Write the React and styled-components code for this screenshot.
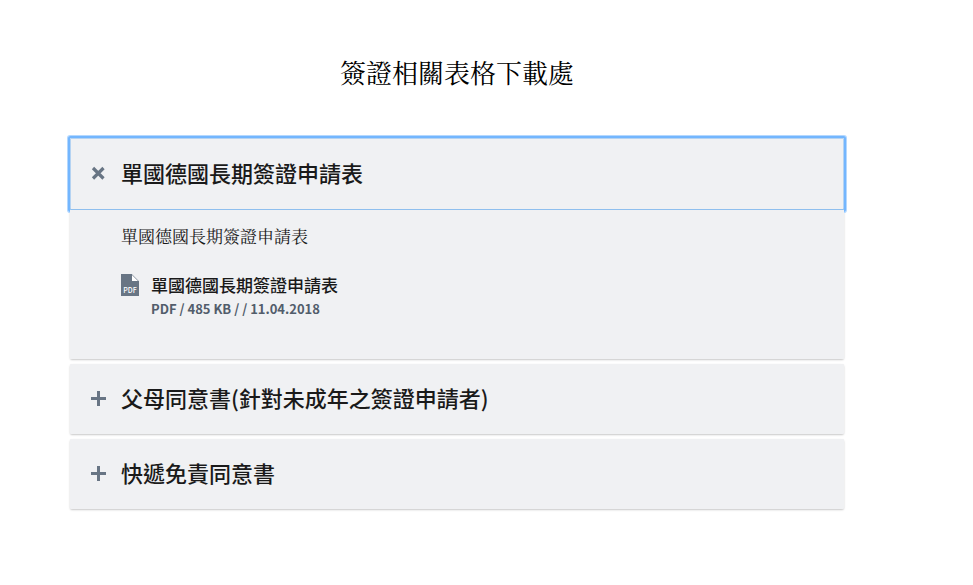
import React, { useState } from "react";
import styled, { createGlobalStyle } from "styled-components";

const GlobalStyle = createGlobalStyle`
  * {
    box-sizing: border-box;
  }

  body {
    margin: 0;
    background-color: #fff;
    color: #1a1a1a;
    font-family: "Noto Sans CJK TC", sans-serif;
  }
`;

const Page = styled.main`
  padding: 54px 129px 60px 70px;
`;

const PageTitle = styled.h1`
  margin: 0 0 42px;
  color: #000;
  font-family: "Liberation Serif", "Noto Serif CJK TC", "Noto Sans CJK TC", serif;
  font-size: 26px;
  font-weight: 400;
  line-height: 42px;
  text-align: center;
`;

const AccordionList = styled.div`
  display: flex;
  flex-direction: column;
  gap: 5px;
`;

const Item = styled.section`
  border-radius: 2px;
  background-color: #f0f1f3;
  box-shadow: 0 1px 2px rgba(0, 0, 0, 0.22);
`;

const ItemHeading = styled.h2`
  margin: 0;
  font-size: 22px;
  font-weight: 500;
`;

const ToggleButton = styled.button`
  display: flex;
  align-items: center;
  gap: 15px;
  width: 100%;
  min-height: ${({ $open }) => ($open ? "72px" : "70px")};
  padding: 0 20px 2px;
  border: 0;
  border-radius: 1px;
  outline: none;
  background-color: #f0f1f3;
  box-shadow: ${({ $open }) =>
    $open
      ? "inset 0 -1px 0 #8fbfee, inset 0 0 0 1px #b5d3f2, 0 0 0 2px #73b6fe, 0 0 0 3px #b4d8ff"
      : "none"};
  color: inherit;
  font: inherit;
  line-height: 30px;
  text-align: left;
  cursor: pointer;

  svg {
    flex: none;
  }
`;

const ToggleTitle = styled.span`
  padding-bottom: 2px;
`;

const Panel = styled.div`
  position: relative;
  padding: 12px 51px 39px;
  background-color: #f0f1f3;
`;

const Description = styled.p`
  margin: 0 0 18px;
  font-family: "Liberation Serif", "Noto Serif CJK TC", "Noto Sans CJK TC", serif;
  font-size: 17px;
  line-height: 32px;
`;

const Download = styled.a`
  display: flex;
  gap: 12px;
  color: inherit;
  text-decoration: none;

  svg {
    flex: none;
    margin-top: 2px;
  }
`;

const DownloadTitle = styled.span`
  display: block;
  font-size: 17px;
  font-weight: 500;
  line-height: 26px;
`;

const DownloadMeta = styled.span`
  display: block;
  color: #525d6b;
  font-size: 13px;
  font-weight: 700;
  line-height: 22px;
`;

const PdfLabel = styled.text`
  fill: #fff;
  font-family: "Noto Sans CJK TC", sans-serif;
  font-size: 7px;
  font-weight: 500;
`;

const ToggleIcon = ({ open }) => (
  <svg width="16" height="16" viewBox="0 0 16 16" aria-hidden="true">
    {open ? (
      <path d="M3 3 13.5 13.5M13.5 3 3 13.5" stroke="#687584" strokeWidth="3.2" />
    ) : (
      <path d="M1 8.5H16M8.5 1V16" stroke="#687584" strokeWidth="3" />
    )}
  </svg>
);

const PdfIcon = () => (
  <svg width="18" height="22" viewBox="0 0 18 22" aria-hidden="true">
    <path d="M0 0H11L18 7V22H0Z" fill="#687584" />
    <path d="M11 0H18V7Z" fill="#f0f1f3" />
    <path d="M11 1V7H17Z" fill="#fff" />
    <PdfLabel x="9" y="19" textAnchor="middle">
      PDF
    </PdfLabel>
  </svg>
);

const forms = [
  {
    title: "單國德國長期簽證申請表",
    description: "單國德國長期簽證申請表",
    file: {
      name: "單國德國長期簽證申請表",
      meta: "PDF / 485 KB / / 11.04.2018",
    },
  },
  { title: "父母同意書(針對未成年之簽證申請者)" },
  { title: "快遞免責同意書" },
];

const AccordionItem = ({ id, form, open, onToggle }) => (
  <Item>
    <ItemHeading>
      <ToggleButton
        type="button"
        $open={open}
        aria-expanded={open}
        aria-controls={form.file ? id : undefined}
        onClick={onToggle}
      >
        <ToggleIcon open={open} />
        <ToggleTitle>{form.title}</ToggleTitle>
      </ToggleButton>
    </ItemHeading>
    {open && form.file && (
      <Panel id={id}>
        <Description>{form.description}</Description>
        <Download href="#download">
          <PdfIcon />
          <span>
            <DownloadTitle>{form.file.name}</DownloadTitle>
            <DownloadMeta>{form.file.meta}</DownloadMeta>
          </span>
        </Download>
      </Panel>
    )}
  </Item>
);

const App = () => {
  const [openIndex, setOpenIndex] = useState(0);

  return (
    <>
      <GlobalStyle />
      <Page>
        <PageTitle>簽證相關表格下載處</PageTitle>
        <AccordionList>
          {forms.map((form, index) => (
            <AccordionItem
              key={form.title}
              id={`form-${index}`}
              form={form}
              open={openIndex === index}
              onToggle={() => setOpenIndex(openIndex === index ? null : index)}
            />
          ))}
        </AccordionList>
      </Page>
    </>
  );
};

export default App;
